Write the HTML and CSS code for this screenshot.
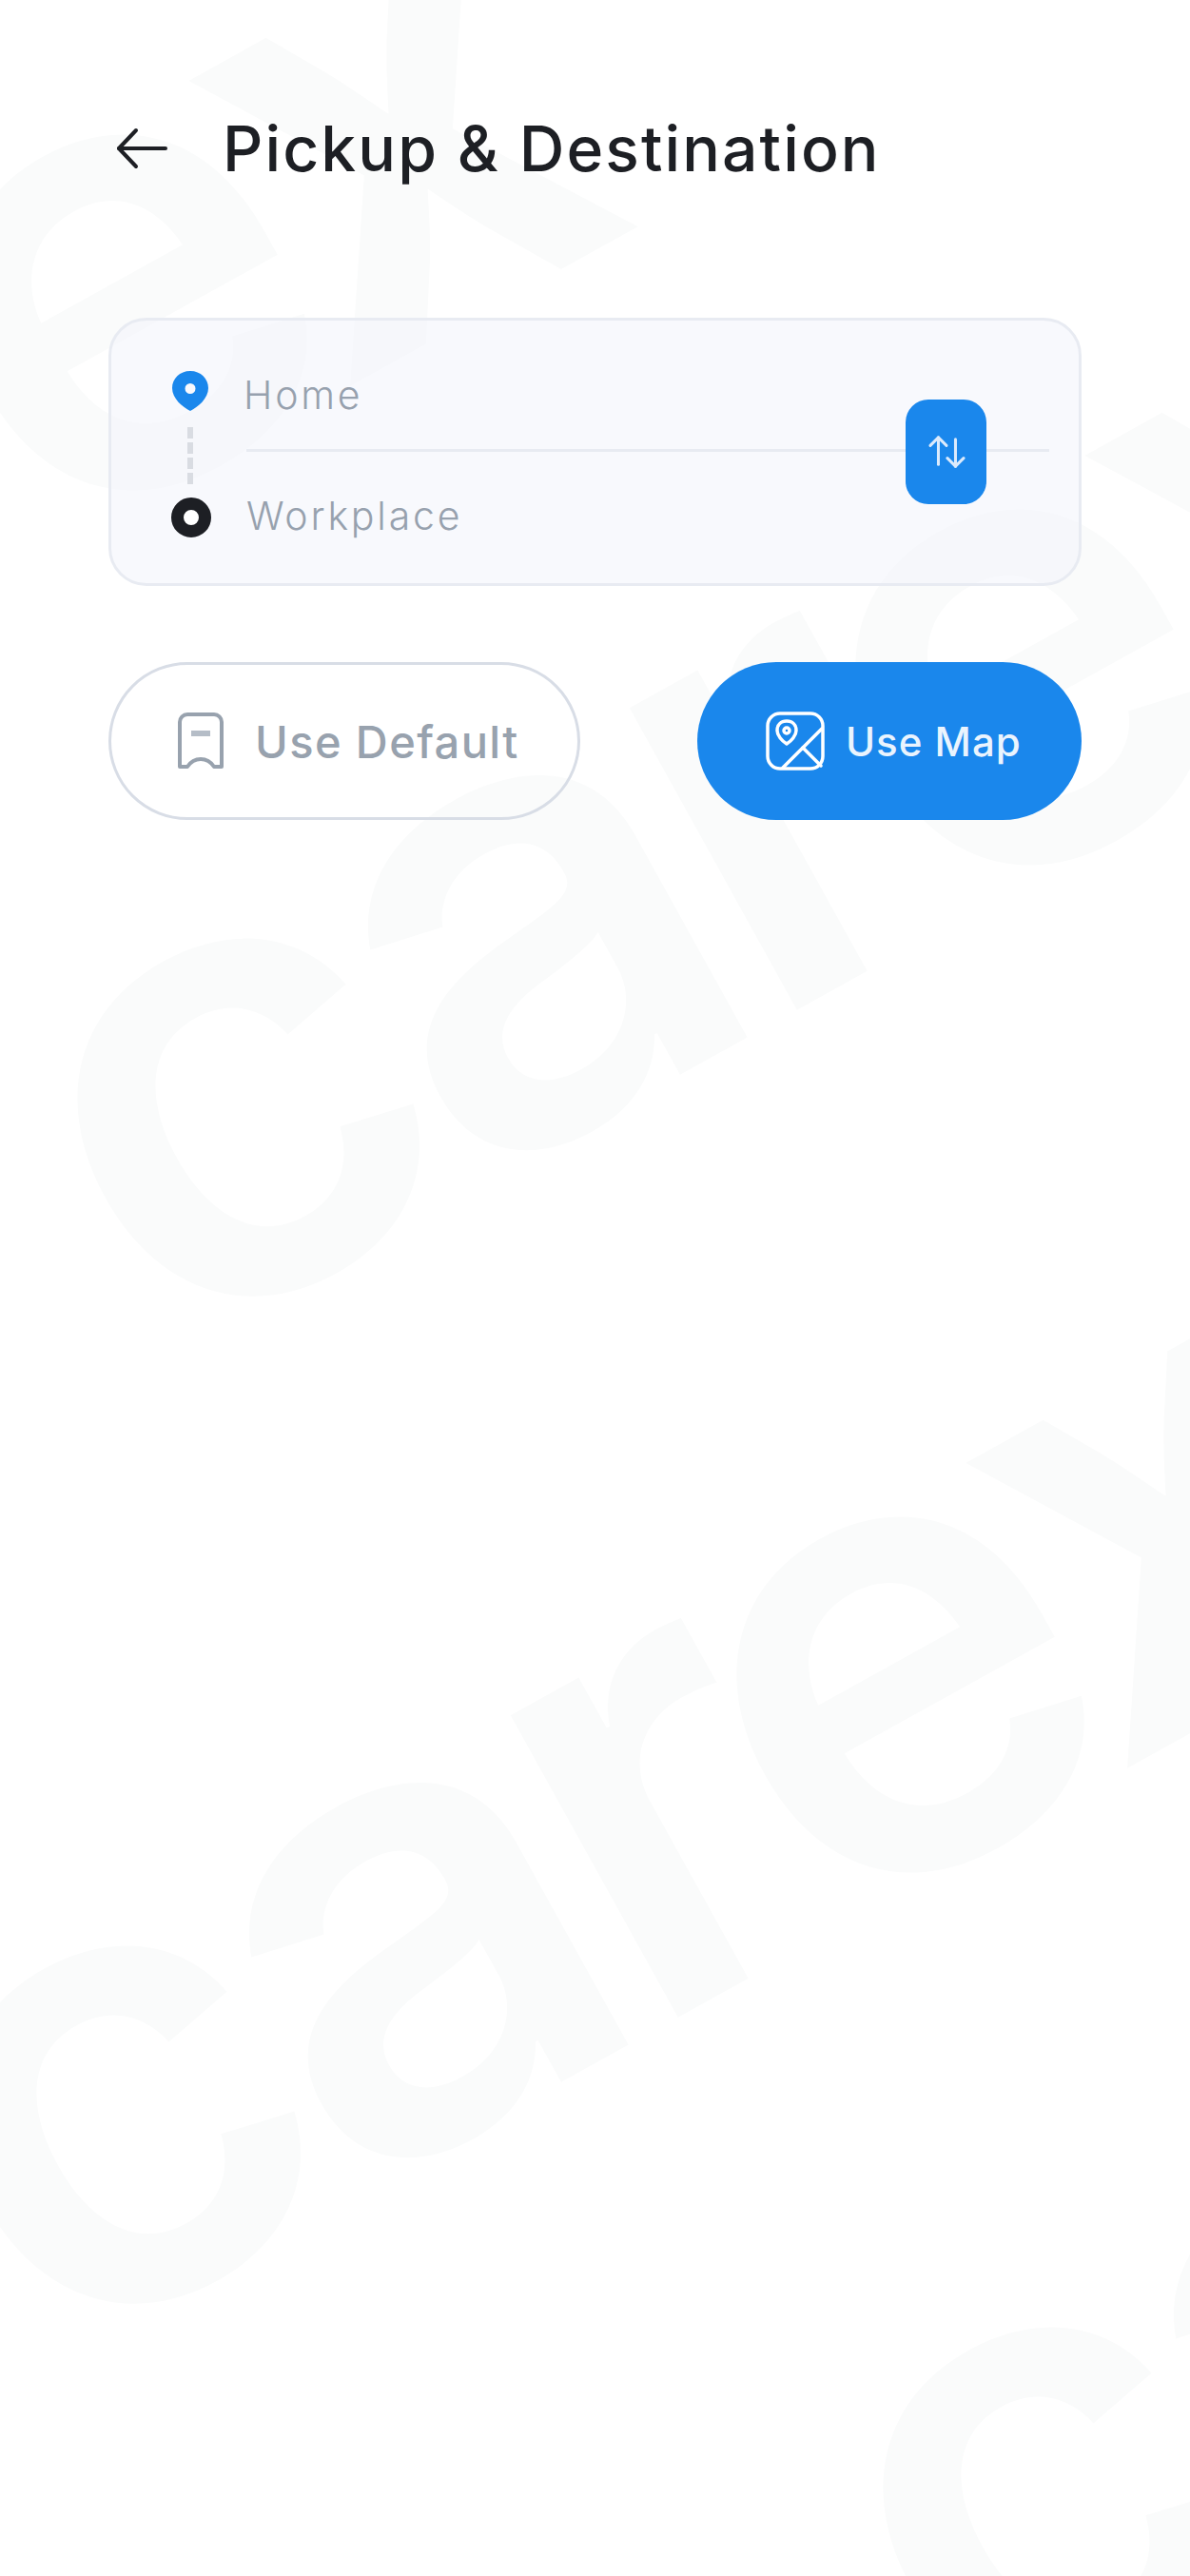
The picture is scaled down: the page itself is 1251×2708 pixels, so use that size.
FILE: index.html
```html
<!DOCTYPE html>
<html lang="en">
<head>
  <meta charset="UTF-8" />
  <meta name="viewport" content="width=device-width, initial-scale=1.0" />
  <title>Pickup &amp; Destination</title>
  <link rel="stylesheet" href="styles.css">
</head>
<body>

  <!-- Faint brand text behind the page -->
  <div class="watermark" aria-hidden="true">
    <span class="mark mark-top">carex</span>
    <span class="mark mark-mid">carex</span>
    <span class="mark mark-low">carex</span>
    <span class="mark mark-end">carex</span>
  </div>

  <main class="page">
    <header class="top-bar">
      <svg class="back-icon" viewBox="0 0 54 44" fill="none" stroke="#1d1f24" stroke-width="4" stroke-linecap="round" stroke-linejoin="round">
        <path d="M52 22H3" />
        <path d="M21 3L3 22l18 19" />
      </svg>
      <h1>Pickup &amp; Destination</h1>
    </header>

    <section class="route-card">
      <div class="route-icons">
        <svg class="pin-icon" viewBox="0 0 40 44">
          <path fill="#1a87ec" fill-rule="evenodd" d="M20 1C9 1 1 9 1 19c0 11 11 20 19 24 8-4 19-13 19-24C39 9 31 1 20 1zm0 13a5.500 5.500 0 1 1 0 11 5.500 5.500 0 0 1 0-11z" />
        </svg>
        <span class="route-dash"></span>
        <span class="route-ring"></span>
      </div>
      <div class="route-fields">
        <p class="field field-from">Home</p>
        <p class="field field-to">Workplace</p>
      </div>
      <button class="swap-btn" aria-label="Swap">
        <svg viewBox="0 0 42 38" fill="none" stroke="#dbeafc" stroke-width="3.200" stroke-linecap="round" stroke-linejoin="round">
          <path d="M12 33V3" />
          <path d="M3 12l9-9 9 9" />
          <path d="M31 5v30" />
          <path d="M22 26l9 9 9-9" />
        </svg>
      </button>
    </section>

    <div class="actions">
      <button class="btn btn-default">
        <svg class="btn-icon-save" viewBox="0 0 48 60" fill="none" stroke="#98a2ae" stroke-width="4" stroke-linejoin="round">
          <path d="M2 10a8 8 0 0 1 8-8h28a8 8 0 0 1 8 8v47l-8 0c-4-6-9-8-14-8s-10 2-14 8l-8 0z" />
          <path d="M14 22h20" stroke-width="6" stroke="#b5bdc7" />
        </svg>
        Use Default
      </button>
      <button class="btn btn-map">
        <svg class="btn-icon-map" viewBox="0 0 62 62" fill="none" stroke="#fff" stroke-width="3.500" stroke-linecap="round" stroke-linejoin="round">
          <rect x="2" y="2" width="58" height="58" rx="13" />
          <path d="M22 10c-6 0-10 4-10 10 0 5 5 11 10 14 5-3 10-9 10-14 0-6-4-10-10-10z" />
          <circle cx="22" cy="20" r="3" />
          <path d="M59 18L18 59" />
          <path d="M39 38l19 19" />
        </svg>
        Use Map
      </button>
    </div>
  </main>

</body>
</html>
```

FILE: styles.css
```css
html, body {
  margin: 0;
  padding: 0;
}
body {
  position: relative;
  width: 1251px;
  height: 2708px;
  overflow: hidden;
  background: #fff;
  font-family: Inter, "Liberation Sans", sans-serif;
}

/* Watermark */
.watermark {
  position: absolute;
  inset: 0;
  overflow: hidden;
}
.mark {
  position: absolute;
  font-size: 665px;
  font-weight: 600;
  line-height: 1;
  letter-spacing: -30px;
  color: #fafbfb;
  transform: rotate(-29deg);
  transform-origin: 0 70%;
}
.mark-top { left: -822px; top: 476px; }
.mark-mid { left: 120px; top: 870px; }
.mark-low { left: -5px; top: 1929px; }
.mark-end { left: 967px; top: 2330px; }

/* Page */
.page {
  position: relative;
  padding: 116px 114px 0;
}
.top-bar {
  display: flex;
  align-items: center;
  gap: 58px;
  height: 80px;
  margin-bottom: 138px;
}
.back-icon {
  width: 54px;
  height: 44px;
  margin-left: 8px;
  flex: none;
}
.top-bar h1 {
  margin: 0;
  font-size: 66px;
  font-weight: 500;
  letter-spacing: 2.100px;
  color: #1d1f24;
}

/* Route card */
.route-card {
  position: relative;
  display: flex;
  box-sizing: border-box;
  width: 1023px;
  height: 282px;
  padding: 0 31px 0 62px;
  background: rgba(243, 245, 252, 0.6);
  border: 3px solid #e8ebf2;
  border-radius: 40px;
}
.route-icons {
  display: flex;
  flex-direction: column;
  align-items: center;
  width: 44px;
  padding-top: 52px;
  flex: none;
}
.pin-icon {
  width: 40px;
  height: 44px;
  margin-left: -3px;
}
.route-dash {
  height: 60px;
  margin: 16px 0 14px -3px;
  border-left: 6px dashed #d9dce2;
}
.route-ring {
  box-sizing: border-box;
  width: 42px;
  height: 42px;
  border: 13px solid #1d1f24;
  border-radius: 50%;
  background: #fff;
}
.route-fields {
  flex: 1;
  margin-left: 36px;
  display: flex;
  flex-direction: column;
}
.field {
  margin: 0;
  height: 139px;
  box-sizing: border-box;
  font-size: 41px;
  font-weight: 300;
  letter-spacing: 2.800px;
  color: #97a1ae;
}
.field-from {
  padding-top: 53px;
  border-bottom: 3px solid #e8ebf2;
  text-indent: -3px;
}
.field-to {
  padding-top: 42px;
}

/* Lies over the divider */
.swap-btn {
  position: absolute;
  left: 835px;
  top: 83px;
  display: flex;
  align-items: center;
  justify-content: center;
  width: 85px;
  height: 110px;
  padding: 0;
  border: 0;
  border-radius: 24px;
  background: #1a87ec;
}
.swap-btn svg {
  width: 40px;
  height: 36px;
}

/* Buttons */
.actions {
  display: flex;
  justify-content: space-between;
  align-items: center;
  width: 1023px;
  margin-top: 80px;
}
.btn {
  display: flex;
  align-items: center;
  box-sizing: border-box;
  height: 166px;
  border-radius: 83px;
  font-family: inherit;
  font-weight: 500;
}
.btn-default {
  width: 496px;
  padding-left: 70px;
  gap: 33px;
  font-size: 47px;
  letter-spacing: 1.400px;
  color: #98a2ae;
  background: transparent;
  border: 3px solid #d8dde6;
}
.btn-map {
  width: 404px;
  padding: 0 0 0 72px;
  gap: 22px;
  font-size: 42px;
  letter-spacing: 1px;
  color: #eaf4fe;
  background: #1a87ec;
  border: 0;
}
.btn-icon-save {
  width: 48px;
  height: 60px;
  flex: none;
}
.btn-icon-map {
  width: 62px;
  height: 62px;
  flex: none;
}
```
